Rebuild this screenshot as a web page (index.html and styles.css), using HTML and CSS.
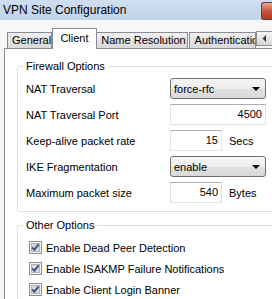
FILE: index.html
```html
<!DOCTYPE HTML>
<html lang="en">
    <head>
        <meta charset="UTF-8">
        <title>VPN Site Configuration</title>
        <link rel="stylesheet" href="styles.css">
    </head>
    <body>
        <div class="window">
            <div class="titlebar">
                <span class="title">VPN Site Configuration</span>
                <span class="close"></span>
            </div>

            <div class="tabbar">
                <div class="tab tab-general">General</div>
                <div class="tab tab-active">Client</div>
                <div class="tab tab-name">Name Resolution</div>
                <div class="tab tab-auth">Authentication</div>
                <div class="tab-scroll">
                    <svg width="5" height="7" viewBox="0 0 5 7"><path d="M4 0 L4 7 L0.5 3.5 Z" fill="#3b3b3b"/></svg>
                </div>
            </div>

            <div class="panel">
                <fieldset class="group group-firewall">
                    <legend>Firewall Options</legend>

                    <div class="row">
                        <span class="label">NAT Traversal</span>
                        <div class="combo"><span>force-rfc</span><i class="arrow"></i></div>
                    </div>

                    <div class="row">
                        <span class="label">NAT Traversal Port</span>
                        <div class="ipt">4500</div>
                    </div>

                    <div class="row">
                        <span class="label">Keep-alive packet rate</span>
                        <div class="ipt ipt-small">15</div>
                        <span class="unit">Secs</span>
                    </div>

                    <div class="row">
                        <span class="label">IKE Fragmentation</span>
                        <div class="combo"><span>enable</span><i class="arrow"></i></div>
                    </div>

                    <div class="row">
                        <span class="label">Maximum packet size</span>
                        <div class="ipt ipt-small">540</div>
                        <span class="unit">Bytes</span>
                    </div>
                </fieldset>

                <fieldset class="group group-other">
                    <legend>Other Options</legend>

                    <div class="check-row">
                        <svg class="chk" width="13" height="13" viewBox="0 0 13 13"><rect x="0.5" y="0.5" width="12" height="12" fill="#f4f4f4" stroke="#8f8f8f"/><rect x="2.5" y="2.5" width="8" height="8" fill="#d8d8d8" stroke="#b4b4b4"/><path d="M3.2 6.4 L5.3 8.8 L9.6 3.4" fill="none" stroke="#3d5489" stroke-width="2"/></svg>
                        <span>Enable Dead Peer Detection</span>
                    </div>

                    <div class="check-row">
                        <svg class="chk" width="13" height="13" viewBox="0 0 13 13"><rect x="0.5" y="0.5" width="12" height="12" fill="#f4f4f4" stroke="#8f8f8f"/><rect x="2.5" y="2.5" width="8" height="8" fill="#d8d8d8" stroke="#b4b4b4"/><path d="M3.2 6.4 L5.3 8.8 L9.6 3.4" fill="none" stroke="#3d5489" stroke-width="2"/></svg>
                        <span>Enable ISAKMP Failure Notifications</span>
                    </div>

                    <div class="check-row">
                        <svg class="chk" width="13" height="13" viewBox="0 0 13 13"><rect x="0.5" y="0.5" width="12" height="12" fill="#f4f4f4" stroke="#8f8f8f"/><rect x="2.5" y="2.5" width="8" height="8" fill="#d8d8d8" stroke="#b4b4b4"/><path d="M3.2 6.4 L5.3 8.8 L9.6 3.4" fill="none" stroke="#3d5489" stroke-width="2"/></svg>
                        <span>Enable Client Login Banner</span>
                    </div>
                </fieldset>
            </div>
        </div>
    </body>
</html>
```

FILE: styles.css
```css
body,html{
margin: 0;
padding: 0;
font-family: "Liberation Sans", Arial, sans-serif;
font-size: 11px;
color: #000;
background-color: #f7f7f7;
overflow: hidden;
}
.window{
width: 272px;
height: 299px;
overflow: hidden;
}

/* title bar */
.titlebar{
height: 20px;
display: flex;
align-items: flex-start;
justify-content: space-between;
background: linear-gradient(#cfdeef, #c1d4ea);
}
.title{
font-size: 12px;
line-height: 14px;
padding: 3px 0 0 3px;
}
.close{
width: 10px;
height: 16px;
margin-top: 2px;
border: 1px solid #6d3a35;
border-right: none;
border-radius: 3px 0 0 3px;
background: linear-gradient(#e8a493, #c9543d 50%, #b83a22);
}

/* tabs */
.tabbar{
display: flex;
align-items: flex-end;
height: 20px;
margin-top: 8px;
margin-left: 4px;
padding-left: 3px;
border-bottom: 1px solid #898c95;
}
.tab{
box-sizing: border-box;
height: 16px;
border: 1px solid #898c95;
border-bottom: none;
background: linear-gradient(#f2f2f2, #e3e3e3 50%, #d9d9d9);
line-height: 14px;
padding-left: 4px;
white-space: nowrap;
overflow: hidden;
}
.tab-general{
width: 45px;
}
.tab-active{
width: 46px;
height: 21px;
margin-bottom: -1px;
background: #fff;
padding: 2px 0 0 0;
text-align: center;
}
.tab-name{
width: 91px;
border-left: none;
}
.tab-auth{
width: 68px;
margin-left: 1px;
padding-left: 5px;
}
.tab-scroll{
box-sizing: border-box;
width: 16px;
height: 15px;
margin-bottom: 2px;
border: 1px solid #8d9096;
border-right: none;
background: linear-gradient(#f4f4f4, #e4e4e4 50%, #d6d6d6);
display: flex;
align-items: center;
padding-left: 5px;
}

/* panel */
.panel{
margin-left: 4px;
height: 260px;
border-left: 1px solid #898c95;
background-color: #fff;
padding-top: 10px;
}
.group{
margin: 0 -20px 0 12px;
padding: 5px 0 8px 8px;
border: 1px solid #d5dfe5;
border-radius: 3px;
}
.group legend{
margin-left: -3px;
padding: 0 3px;
line-height: 14px;
}
.group-other{
margin-top: 6px;
padding-top: 5px;
padding-bottom: 0;
}

.row{
display: flex;
align-items: center;
height: 21px;
margin-bottom: 5px;
}
.row:last-child{
margin-bottom: 0;
}
.label{
width: 144px;
}
.combo{
box-sizing: border-box;
width: 96px;
height: 21px;
display: flex;
align-items: center;
justify-content: space-between;
padding: 0 5px 0 3px;
border: 1px solid #707070;
border-radius: 3px;
background: linear-gradient(#f6f6f6, #ececec 50%, #e0e0e0 51%, #d9d9d9);
}
.arrow{
width: 0;
height: 0;
border-left: 4px solid transparent;
border-right: 4px solid transparent;
border-top: 4px solid #000;
}
.ipt{
box-sizing: border-box;
width: 96px;
height: 21px;
line-height: 19px;
text-align: right;
padding-right: 3px;
border: 1px solid #e2e3ea;
border-top-color: #abadb3;
background: #fff;
}
.ipt-small{
width: 52px;
}
.unit{
margin-left: 7px;
}

.check-row{
display: flex;
align-items: center;
height: 21px;
padding-left: 3px;
}
.chk{
margin-right: 4px;
}
```
